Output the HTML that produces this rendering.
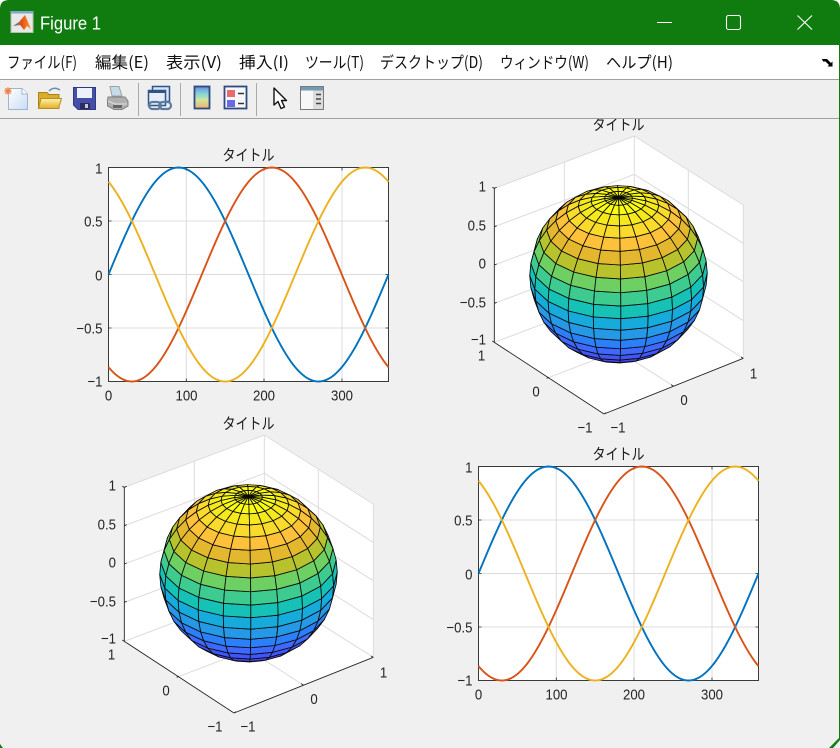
<!DOCTYPE html>
<html lang="ja"><head><meta charset="utf-8"><title>Figure 1</title>
<style>
html,body{margin:0;padding:0;width:840px;height:748px;overflow:hidden;background:#f0f0f0}
svg{display:block;position:absolute;left:0;top:0}
text{font-family:"Liberation Sans","Noto Sans CJK JP",sans-serif}
.m{font-size:16px;fill:#111;font-family:"Noto Sans CJK JP","Liberation Sans",sans-serif}
.t{font-size:15px;fill:#262626}
.e{text-anchor:end}.c{text-anchor:middle}
.h{font-size:15.500px;fill:#1a1a1a;font-family:"Noto Sans CJK JP","Liberation Sans",sans-serif}
</style></head><body>
<svg xmlns="http://www.w3.org/2000/svg" width="840" height="748" viewBox="0 0 840 748">
<defs>
<linearGradient id="cb" x1="0" y1="0" x2="0" y2="1"><stop offset="0" stop-color="#6f8cd8"/><stop offset=".3" stop-color="#7fd0dc"/><stop offset=".6" stop-color="#cfe6a0"/><stop offset="1" stop-color="#f4b070"/></linearGradient>
<linearGradient id="fo" x1="0" y1="0" x2="0" y2="1"><stop offset="0" stop-color="#fff2a8"/><stop offset="1" stop-color="#e0ae28"/></linearGradient>
<linearGradient id="dc" x1="0" y1="0" x2="1" y2="1"><stop offset="0" stop-color="#fff"/><stop offset="1" stop-color="#c8dcf5"/></linearGradient>
<linearGradient id="ma" x1="0" y1="0" x2="1" y2="0"><stop offset="0" stop-color="#2f7fc0"/><stop offset=".5" stop-color="#e8501a"/><stop offset="1" stop-color="#f5a020"/></linearGradient>
<clipPath id="cv"><rect x="0" y="119" width="840" height="629"/></clipPath>
</defs>
<rect width="840" height="748" fill="#f0f0f0"/>
<!-- title bar -->
<rect width="840" height="60" fill="#fff"/>
<path d="M0 45V9Q0 0 9 0H831Q840 0 840 9V45Z" fill="#107c10"/>
<rect x="839" y="45" width="1" height="695" fill="#107c10"/>
<path d="M0 744L3 748H0Z" fill="#107c10"/><path d="M840 737V740L833 748H829L838 739Z" fill="#107c10"/>
<!-- matlab icon -->
<rect x="11" y="11.500" width="22" height="21" fill="#e8e8e8" stroke="#b9b9b9"/>
<rect x="11" y="11" width="22" height="2.500" fill="#7fa8d0"/>
<path d="M13 26L19 22L25 15L31 29L27 26L24 30L20 25Z" fill="url(#ma)"/>
<text x="40" y="29.500" font-size="18" fill="#fff" textLength="61" lengthAdjust="spacingAndGlyphs">Figure 1</text>
<path d="M657 22.500H672" stroke="#fff" stroke-width="1"/>
<rect x="726.500" y="15.500" width="14" height="14" rx="2" fill="none" stroke="#fff" stroke-width="1.100"/>
<path d="M797.500 15.500L812 29.500M812 15.500L797.500 29.500" stroke="#fff" stroke-width="1.100"/>
<!-- menu -->
<rect x="0" y="45" width="839" height="34" fill="#fff"/>
<text class="m" x="7" y="68" textLength="70" lengthAdjust="spacingAndGlyphs">ファイル(F)</text>
<text class="m" x="95" y="68" textLength="54" lengthAdjust="spacingAndGlyphs">編集(E)</text>
<text class="m" x="166" y="68" textLength="56" lengthAdjust="spacingAndGlyphs">表示(V)</text>
<text class="m" x="239" y="68" textLength="50" lengthAdjust="spacingAndGlyphs">挿入(I)</text>
<text class="m" x="305" y="68" textLength="59" lengthAdjust="spacingAndGlyphs">ツール(T)</text>
<text class="m" x="380" y="68" textLength="103" lengthAdjust="spacingAndGlyphs">デスクトップ(D)</text>
<text class="m" x="500" y="68" textLength="89" lengthAdjust="spacingAndGlyphs">ウィンドウ(W)</text>
<text class="m" x="606" y="68" textLength="67" lengthAdjust="spacingAndGlyphs">ヘルプ(H)</text>
<path d="M822 59H827L831 63L832.500 61.500V66.500H827.500L829 65L825.500 61.500H823Z" fill="#000"/>
<rect x="0" y="79" width="839" height="1" fill="#a0a0a0"/>
<rect x="0" y="80" width="839" height="38" fill="#efefef"/>
<rect x="0" y="118" width="839" height="1" fill="#a0a0a0"/>
<!-- toolbar icons -->
<path d="M8.500 88.500H22L27.500 94V109.500H8.500Z" fill="url(#dc)" stroke="#9fb4d0"/>
<path d="M22 88.500V94H27.500" fill="#fff" stroke="#9fb4d0"/>
<circle cx="8" cy="91" r="3" fill="#f4a070"/><path d="M4 91H12M8 87V95M5 88L11 94M11 88L5 94" stroke="#ef7d45" stroke-width=".8"/>
<path d="M38.500 97V92.500H47L49 94.500H59V108.500H38.500Z" fill="#d9ad2c" stroke="#a9831a"/>
<path d="M38.500 108.500L41 98.500H61.500L58.500 108.500Z" fill="url(#fo)" stroke="#b58e1e"/>
<path d="M49 91Q54 86 60 90" fill="none" stroke="#6c8bb0" stroke-width="1.500"/>
<path d="M73.500 87.500H95.500V109.500H78L73.500 105Z" fill="#4450a8" stroke="#2f3a85"/>
<rect x="77" y="88" width="15" height="10" fill="#eef0fa"/>
<rect x="80" y="103" width="10" height="6" fill="#2b2b60"/><rect x="85" y="104" width="3" height="4" fill="#c8c8d8"/>
<path d="M110 86.500H119L122 96H112Z" fill="#c4dcea" stroke="#a0a0a0"/>
<path d="M108 97H125L128 101V106L122 109.500H114L107.500 106V101Z" fill="#b0b0b0" stroke="#808080"/>
<path d="M108 101L115 104H127" fill="none" stroke="#e0e0e0"/>
<rect x="113" y="105" width="9" height="3" fill="#666"/>
<rect x="138" y="83" width="1" height="33" fill="#aaa"/>
<rect x="152.500" y="86.500" width="17" height="15" fill="#d8e4f4" stroke="#2f5488" stroke-width="1.500"/>
<rect x="148.500" y="90.500" width="17" height="15" fill="#e8eef8" stroke="#2f5488" stroke-width="1.500"/>
<rect x="148" y="90" width="18" height="3" fill="#2f5488"/>
<rect x="149" y="102" width="12" height="7" rx="3.500" fill="none" stroke="#5c7ba0" stroke-width="2.200"/>
<rect x="159" y="102" width="12" height="7" rx="3.500" fill="none" stroke="#5c7ba0" stroke-width="2.200"/>
<rect x="180" y="83" width="1" height="33" fill="#aaa"/>
<rect x="194.500" y="86.500" width="15" height="22" fill="url(#cb)" stroke="#2f4a80" stroke-width="1.800"/>
<rect x="224.500" y="86.500" width="22" height="22" fill="#f6f8fc" stroke="#2f4a80" stroke-width="1.800"/>
<rect x="227" y="90" width="8" height="7" fill="#e86a6a"/><rect x="227" y="100" width="8" height="7" fill="#6a6ae8"/>
<path d="M238 93.500H244M238 103.500H244" stroke="#333" stroke-width="1.500"/>
<rect x="256" y="83" width="1" height="33" fill="#aaa"/>
<path d="M274 88V105L278 101.500L281 108.500L284.500 107L281.500 100.500H286.500Z" fill="#fff" stroke="#111" stroke-width="1.400" stroke-linejoin="round"/>
<rect x="300.500" y="86.500" width="23" height="23" fill="#dcdcdc" stroke="#7a7a7a"/>
<rect x="301" y="87" width="22" height="3.500" fill="#6f9cb5"/>
<rect x="301" y="90.500" width="12" height="18.500" fill="#f7f7f7"/>
<path d="M316 94.500H321M316 99H321M316 103.500H321" stroke="#444" stroke-width="1.500"/>
<!-- canvas -->
<g clip-path="url(#cv)">
<!-- plot 1 -->
<g id="p1">
<rect x="108.500" y="167.500" width="280" height="214" fill="#fff"/>
<path d="M186.300 167.500V381.500M264 167.500V381.500M342 167.500V381.500M108.500 221H388.500M108.500 274.500H388.500M108.500 328H388.500" stroke="#dcdcdc" fill="none"/>
<rect x="108.500" y="167.500" width="280" height="214" fill="none" stroke="#262626" stroke-width=".9"/>
<path d="M186.300 167.500v3M264 167.500v3M342 167.500v3M186.300 381.500v-3M264 381.500v-3M342 381.500v-3M108.500 221h3M108.500 274.500h3M108.500 328h3M388.500 221h-3M388.500 274.500h-3M388.500 328h-3" stroke="#262626" stroke-width=".8"/>
<g class="curves"></g>
<text class="h c" x="248.500" y="160.500" textLength="52" lengthAdjust="spacingAndGlyphs">タイトル</text>
<text class="t e" x="102.500" y="173.500">1</text><text class="t e" x="102.500" y="226.500">0.5</text><text class="t e" x="102.500" y="280.500">0</text><text class="t e" x="102.500" y="333.500">−0.5</text><text class="t e" x="102.500" y="386.500">−1</text>
<text class="t c" x="108.500" y="400.500">0</text><text class="t c" x="186.500" y="400.500">100</text><text class="t c" x="264" y="400.500">200</text><text class="t c" x="342" y="400.500">300</text>
</g>
<!-- plot 4 -->
<g id="p2" transform="translate(370,299)">
<rect x="108.500" y="167.500" width="280" height="214" fill="#fff"/>
<path d="M186.300 167.500V381.500M264 167.500V381.500M342 167.500V381.500M108.500 221H388.500M108.500 274.500H388.500M108.500 328H388.500" stroke="#dcdcdc" fill="none"/>
<rect x="108.500" y="167.500" width="280" height="214" fill="none" stroke="#262626" stroke-width=".9"/>
<path d="M186.300 167.500v3M264 167.500v3M342 167.500v3M186.300 381.500v-3M264 381.500v-3M342 381.500v-3M108.500 221h3M108.500 274.500h3M108.500 328h3M388.500 221h-3M388.500 274.500h-3M388.500 328h-3" stroke="#262626" stroke-width=".8"/>
<g class="curves"></g>
<text class="h c" x="248.500" y="160.500" textLength="52" lengthAdjust="spacingAndGlyphs">タイトル</text>
<text class="t e" x="102.500" y="173.500">1</text><text class="t e" x="102.500" y="226.500">0.5</text><text class="t e" x="102.500" y="280.500">0</text><text class="t e" x="102.500" y="333.500">−0.5</text><text class="t e" x="102.500" y="386.500">−1</text>
<text class="t c" x="108.500" y="400.500">0</text><text class="t c" x="186.500" y="400.500">100</text><text class="t c" x="264" y="400.500">200</text><text class="t c" x="342" y="400.500">300</text>
</g>
<!-- sphere plot top right -->
<g id="s1">
<g class="box"></g>
<text class="h c" x="618.500" y="130" textLength="52" lengthAdjust="spacingAndGlyphs">タイトル</text>
<text class="t e" x="486" y="191.500">1</text><text class="t e" x="486" y="230.500">0.5</text><text class="t e" x="486" y="268.500">0</text><text class="t e" x="486" y="307.500">−0.5</text><text class="t e" x="486" y="344.500">−1</text>
<text class="t c" x="481.500" y="360.500">1</text><text class="t c" x="536" y="396.500">0</text><text class="t c" x="585" y="432.500">−1</text>
<text class="t c" x="618" y="432.500">−1</text><text class="t c" x="684" y="405">0</text><text class="t c" x="753.500" y="378.500">1</text>
</g>
<!-- sphere plot bottom left -->
<g id="s2" transform="translate(-370,299)">
<g class="box"></g>
<text class="h c" x="618.500" y="130" textLength="52" lengthAdjust="spacingAndGlyphs">タイトル</text>
<text class="t e" x="486" y="191.500">1</text><text class="t e" x="486" y="230.500">0.5</text><text class="t e" x="486" y="268.500">0</text><text class="t e" x="486" y="307.500">−0.5</text><text class="t e" x="486" y="344.500">−1</text>
<text class="t c" x="481.500" y="360.500">1</text><text class="t c" x="536" y="396.500">0</text><text class="t c" x="585" y="432.500">−1</text>
<text class="t c" x="618" y="432.500">−1</text><text class="t c" x="684" y="405">0</text><text class="t c" x="753.500" y="378.500">1</text>
</g>
</g>
</svg>
<script>
(function(){
var NS='http://www.w3.org/2000/svg';
function add(g,html){var t=document.createElementNS(NS,'g');t.innerHTML=html;g.appendChild(t);}
document.querySelectorAll('text.t').forEach(function(t){
 var w=t.getComputedTextLength();
 t.setAttribute('textLength',(w*0.88).toFixed(2));
 t.setAttribute('lengthAdjust','spacingAndGlyphs');
});
function curve(ph,col){var p=[];for(var d=0;d<=360;d+=3){var x=108.5+d/360*280,y=274.5-107*Math.sin((d-ph)*Math.PI/180);p.push(x.toFixed(2)+','+y.toFixed(2));}
 return '<polyline points="'+p.join(' ')+'" fill="none" stroke="'+col+'" stroke-width="1.9"/>';}
var cs=curve(0,'#0072BD')+curve(120,'#D95319')+curve(240,'#EDB120');
document.querySelectorAll('.curves').forEach(function(g){add(g,cs);});
function P(a,b){return (460+a/3).toFixed(2)+' '+(110+b/3).toFixed(2);}
function L(a,b,c,d){return 'M'+P(a,b)+'L'+P(c,d);}
var gr='';
[[103,235,523,78],[103,350,523,193],[103,465,523,308],[103,580,523,423],[103,697,523,538],
 [523,78,850,285],[523,193,850,400],[523,308,850,515],[523,423,850,632],[523,538,850,745],
 [523,78,523,538],[850,285,850,745],[313,157,313,619],[685,182,685,642],[313,619,640,828],[685,642,260,805]
].forEach(function(l){gr+=L(l[0],l[1],l[2],l[3]);});
var ax=L(103,235,103,697)+L(103,697,432,912)+L(432,912,850,745);
var tk=L(103,235,110,232)+L(103,350,110,347)+L(103,465,110,462)+L(103,580,110,577)+L(103,235,97,232)
 +L(260,805,267,802)+L(640,828,633,824)+L(850,745,843,741)+L(103,697,97,693)+L(432,912,438,908);
var poly='<path d="M'+P(103,235)+'L'+P(523,78)+'L'+P(850,285)+'L'+P(850,745)+'L'+P(432,912)+'L'+P(103,697)+'Z" fill="#fff"/>';
var cx=618.5,cy=274.3,R=88.8,az=-37.5*Math.PI/180,el=30*Math.PI/180;
var ca=Math.cos(az),sa=Math.sin(az),ce=Math.cos(el),se=Math.sin(el);
var v=[ce*sa,-ce*ca,se];
function pr(lat,lon){var cl=Math.cos(lat),x=cl*Math.cos(lon),y=cl*Math.sin(lon),z=Math.sin(lat);
 return [cx+R*(x*ca+y*sa),cy-R*(-x*sa*se+y*ca*se+z*ce)];}
var bands=['#3a2aa8','#3b30c8','#4038e0','#4343f0','#4056fb','#3f68fe','#2b80fa','#2599e6','#17abdb','#16c2b5',
           '#3dcb8f','#6ecf63','#b8c22d','#e4b82e','#fec13a','#fada2a','#f5e91d','#f9fb15','#f9fb15','#f9fb15'];
var s='',rad=Math.PI/180;
for(var j=0;j<20;j++){var a=-90+9*j,b=a+9;
 var col=j==0?bands[0]:bands[j-1];
 for(var i=0;i<20;i++){var t0=-180+18*i,t1=t0+18;
  var mlat=(a+b)/2*rad,mlon=(t0+t1)/2*rad;
  var n=[Math.cos(mlat)*Math.cos(mlon),Math.cos(mlat)*Math.sin(mlon),Math.sin(mlat)];
  if(n[0]*v[0]+n[1]*v[1]+n[2]*v[2]<=0)continue;
  var q=[pr(a*rad,t0*rad),pr(a*rad,t1*rad),pr(b*rad,t1*rad),pr(b*rad,t0*rad)];
  s+='<path d="M'+q.map(function(p){return p[0].toFixed(2)+' '+p[1].toFixed(2);}).join('L')+'Z" fill="'+col+'" stroke="#0a0a0a" stroke-width=".85" stroke-linejoin="round"/>';
 }
}
var html=poly+'<path d="'+gr+'" stroke="#dcdcdc" fill="none" stroke-width="1"/>'
 +'<path d="'+ax+tk+'" stroke="#262626" fill="none" stroke-width=".9"/>'+s;
document.querySelectorAll('.box').forEach(function(g){add(g,html);});
})();
</script>
</body></html>
